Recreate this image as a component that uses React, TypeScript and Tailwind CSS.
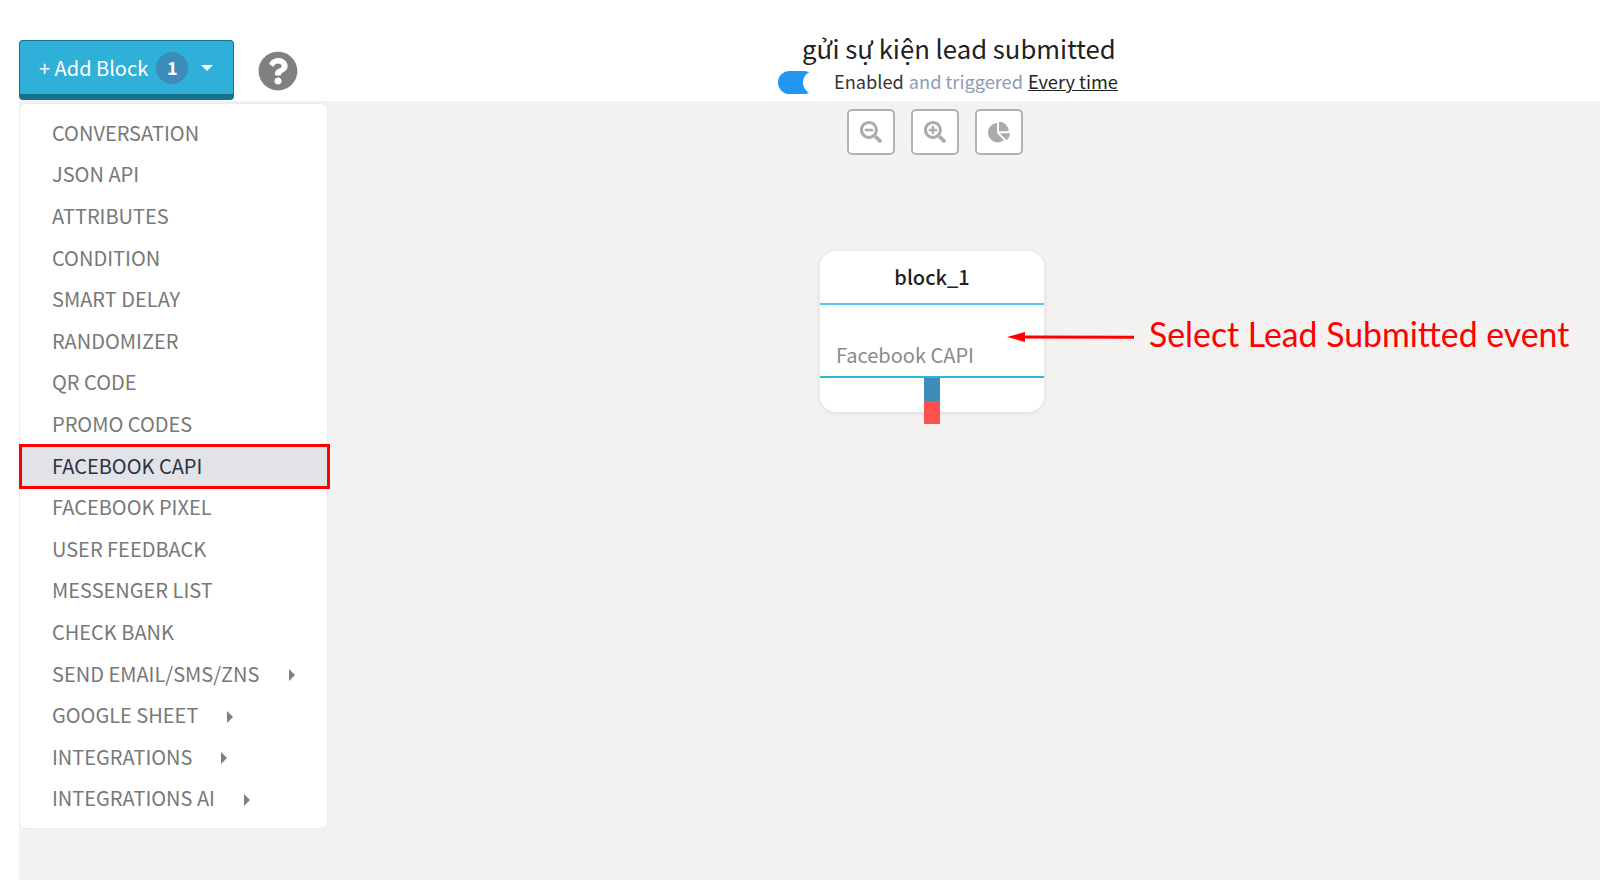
import { FaChartPie, FaQuestionCircle, FaSearchMinus, FaSearchPlus } from "react-icons/fa";

const font = "font-['Noto_Sans_CJK_SC','Noto_Sans',sans-serif]";

const items: { label: string; arrowGap?: number; active?: boolean }[] = [
  { label: "CONVERSATION" },
  { label: "JSON API" },
  { label: "ATTRIBUTES" },
  { label: "CONDITION" },
  { label: "SMART DELAY" },
  { label: "RANDOMIZER" },
  { label: "QR CODE" },
  { label: "PROMO CODES" },
  { label: "FACEBOOK CAPI", active: true },
  { label: "FACEBOOK PIXEL" },
  { label: "USER FEEDBACK" },
  { label: "MESSENGER LIST" },
  { label: "CHECK BANK" },
  { label: "SEND EMAIL/SMS/ZNS", arrowGap: 29 },
  { label: "GOOGLE SHEET", arrowGap: 29 },
  { label: "INTEGRATIONS", arrowGap: 29 },
  { label: "INTEGRATIONS AI", arrowGap: 29 },
];

function ToolButton({ children }: { children: React.ReactNode }) {
  return (
    <div className="flex h-[46px] w-[48px] items-center justify-center rounded-[5px] border-2 border-[#b3b3b3] bg-white text-[22px] text-[#ababab]">
      {children}
    </div>
  );
}

export default function App() {
  return (
    <div className={`${font} flex h-[880px] w-[1600px] flex-col overflow-hidden bg-white`}>
      <header className="flex h-[101px] shrink-0">
        <div className="ml-[19px] mt-[40px] flex h-[60px] w-[215px] items-center rounded-[4px] border border-[#17708c] border-b-[6px] bg-[#2fb0d8] pl-[19px] text-[20px] text-white">
          <span>+ Add Block</span>
          <span className="ml-[8px] flex h-[32px] w-[32px] items-center justify-center rounded-full bg-[#3c8cba] text-[18px] font-semibold">1</span>
          <span className="ml-[13px] h-0 w-0 border-x-[6px] border-t-[6px] border-x-transparent border-t-white"></span>
        </div>
        <FaQuestionCircle className="ml-[24px] mt-[51px] text-[40px] text-[#808080]" />
        <div className="ml-[481px] mt-[28px] flex w-[400px] flex-col">
          <div className="ml-[23px] h-[40px] whitespace-nowrap text-[25.7px] leading-[40px] text-[#212121]">gửi sự kiện lead submitted</div>
          <div className="-ml-px mt-[1px] flex h-[26px] items-center whitespace-nowrap text-[18.2px]">
            <span className="h-[23px] w-[37px] rounded-full bg-[#2196f3]"></span>
            <span className="-ml-[12px] h-[23px] w-[24px] rounded-full bg-white"></span>
            <span className="ml-[7px] text-[#333]">Enabled</span>
            <span className="ml-[5px] text-[#8a9bb3]">and triggered</span>
            <span className="ml-[5px] text-[#222] underline">Every time</span>
          </div>
        </div>
      </header>
      <main className="relative ml-[19px] flex flex-1 bg-[#f3f2f1]">
        <nav className="ml-px mt-[3px] h-[724px] w-[307px] rounded-[6px] bg-white pt-[8px] shadow-[0_0_2px_rgba(0,0,0,0.08)]">
          {items.map((item) => (
            <div key={item.label} className="relative flex h-[41.6px] items-center pl-[32px] text-[20px] text-[#787878]">
              {item.active && (
                <div className="absolute -left-px top-[-1px] right-[-3px] bottom-[-3px] border-[3px] border-[#ff0000] bg-[#e1e3e8]"></div>
              )}
              <span className={item.active ? "relative text-[#2a3342]" : ""}>{item.label}</span>
              {item.arrowGap && (
                <span
                  className="mt-[3px] h-0 w-0 border-y-[6px] border-l-[6px] border-y-transparent border-l-[#808080]"
                  style={{ marginLeft: item.arrowGap }}
                ></span>
              )}
            </div>
          ))}
        </nav>
        <div className="ml-[520px] mt-[8px] flex h-[46px] gap-[16px]">
          <ToolButton><FaSearchMinus /></ToolButton>
          <ToolButton><FaSearchPlus /></ToolButton>
          <ToolButton><FaChartPie /></ToolButton>
        </div>

        <div className="absolute left-[801px] top-[150px] h-[161px] w-[224px] rounded-[16px] bg-white shadow-[0_1px_5px_rgba(0,0,0,0.1)]">
          <div className="flex h-[54px] items-center justify-center border-b-2 border-[#5cc1ea] text-[20px] font-medium text-[#222]">block_1</div>
          <div className="flex h-[73px] items-end border-b-2 border-[#2fb4dc] pb-[6px] pl-[16px] text-[20px] text-[#8a8a8a]">Facebook CAPI</div>
          <div className="ml-[104px] h-[23px] w-[16px] bg-[#3c8cba]"></div>
          <div className="ml-[104px] h-[23px] w-[16px] bg-[#ff5050]"></div>
        </div>

        <svg className="absolute left-[985px] top-[226px]" width="140" height="20" viewBox="0 0 140 20">
          <path d="M3 10 L21 5 L21 8.5 L130 8.8 L130 11.8 L21 11.5 L21 15 Z" fill="#ff0000" />
        </svg>
        <div className="absolute left-[1130px] top-[209px] font-['Lato',sans-serif] text-[33.8px] leading-[48px] whitespace-nowrap text-[#ff0000]">Select Lead Submitted event</div>
      </main>
    </div>
  );
}
